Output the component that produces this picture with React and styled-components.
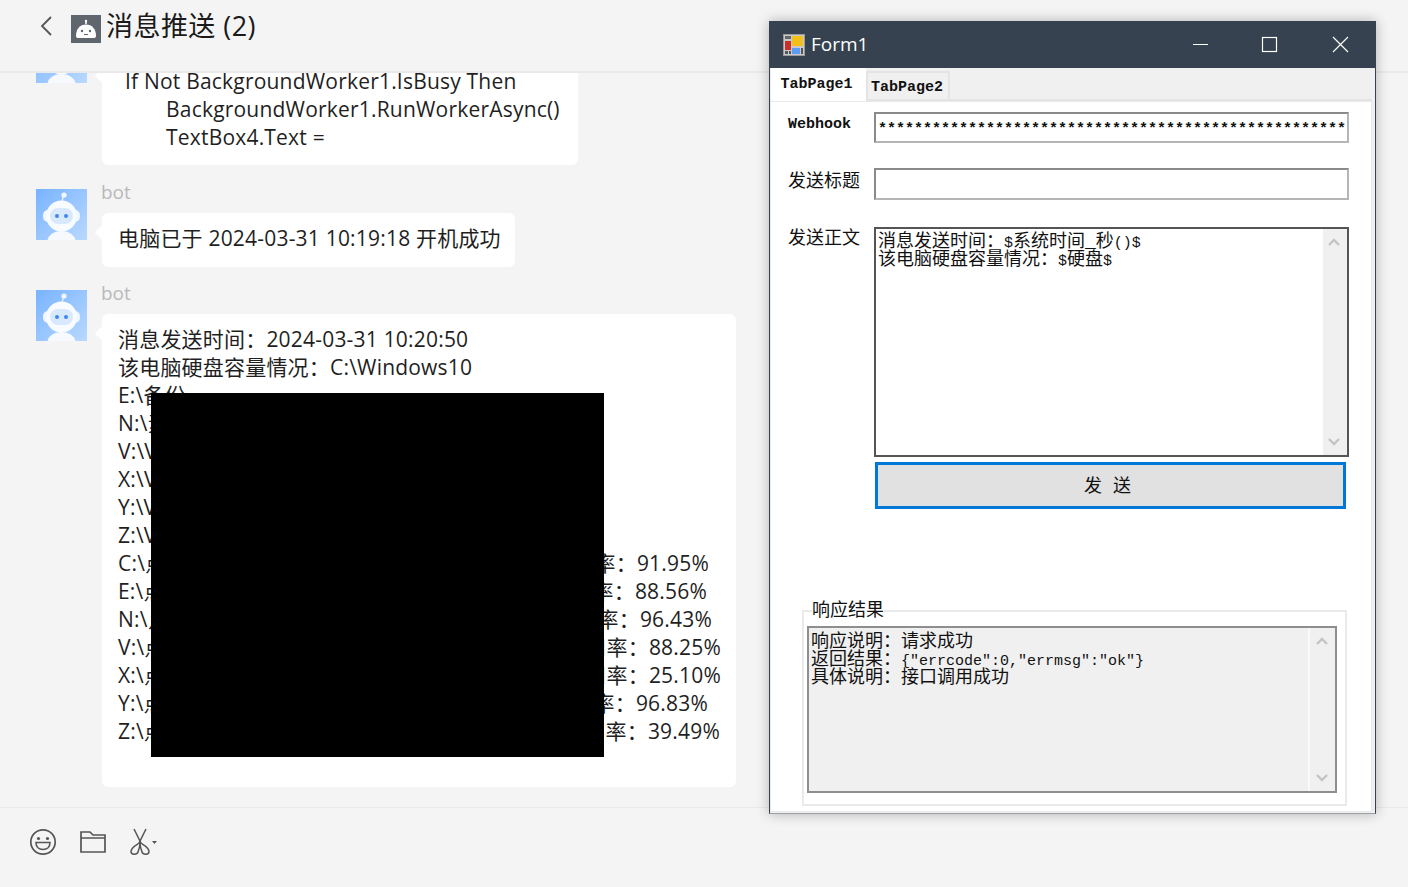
import React from "react";
import styled, { createGlobalStyle } from "styled-components";

const Global = createGlobalStyle`
  html, body { margin: 0; padding: 0; }
  body { background: #f4f4f4; overflow: hidden; }
`;

const UI_FONT = `"Open Sans", "Noto Sans CJK SC", sans-serif`;
const WIN_FONT = `"Liberation Mono", "Noto Sans CJK SC", monospace`;

const Page = styled.div`
  position: relative;
  width: 1408px;
  height: 887px;
  display: flex;
  flex-direction: column;
  background: #f4f4f4;
  color: #1f1f1f;
  font-family: ${UI_FONT};
  overflow: hidden;
`;

const Header = styled.header`
  flex: 0 0 73px;
  box-sizing: border-box;
  border-bottom: 2px solid #e9e9e9;
  display: flex;
  align-items: flex-start;
  padding: 11px 0 0 39px;
`;

const Back = styled.svg`
  width: 14px;
  height: 24px;
  margin-top: 3px;
  margin-right: 18px;
`;

const HeaderTitle = styled.h1`
  margin: 0 0 0 5px;
  font-size: 27px;
  line-height: 30px;
  font-weight: 400;
  letter-spacing: 0.45px;
  color: #1a1a1a;
`;

const HeaderIcon = styled.svg`
  width: 30px;
  height: 28px;
  margin-top: 4px;
`;

const Messages = styled.main`
  flex: 1;
  min-height: 0;
  overflow: hidden;
  display: flex;
  flex-direction: column;
  justify-content: flex-end;
  padding: 0 0 20px 36px;
`;

const Message = styled.div`
  flex: none;
  display: flex;
  gap: 15px;
  align-items: flex-start;
  margin-top: ${(props) => props.$gap || 0}px;
`;

const Avatar = styled.svg`
  flex: none;
  width: 51px;
  height: 51px;
`;

const MessageBody = styled.div`
  display: flex;
  flex-direction: column;
  align-items: flex-start;
`;

const Sender = styled.div`
  height: 24px;
  margin-left: -1px;
  font-size: 19px;
  line-height: 6px;
  color: #b9b9b9;
`;

const Bubble = styled.div`
  position: relative;
  box-sizing: border-box;
  background: #fff;
  border-radius: 6px;
  padding: 11px 16px 14px;
  min-height: 54px;
  width: ${(props) => props.$width}px;
  font-size: 21px;
  line-height: 28px;
  letter-spacing: 0.2px;
  white-space: nowrap;

  &::before {
    content: "";
    position: absolute;
    left: -5px;
    top: 14px;
    width: 11px;
    height: 11px;
    background: #fff;
    transform: rotate(45deg);
  }
`;

const Line = styled.div`
  height: 28px;
  padding-left: ${(props) => props.$indent || 0}px;
`;

const SplitLine = styled.div`
  height: 28px;
  width: ${(props) => props.$width}px;
  display: flex;
  justify-content: space-between;
`;

const Redaction = styled.div`
  position: absolute;
  left: 49px;
  top: 79px;
  width: 453px;
  height: 364px;
  background: #000;
`;

const Footer = styled.footer`
  flex: 0 0 80px;
  box-sizing: border-box;
  border-top: 1px solid #e9e9e9;
  display: flex;
  align-items: flex-start;
  padding: 20px 0 0 29px;
  gap: 22px;
`;

const ToolIcon = styled.svg`
  display: block;
`;

/* the floating WinForms window */
const Window = styled.section`
  position: absolute;
  left: 769px;
  top: 21px;
  width: 607px;
  height: 793px;
  box-sizing: border-box;
  display: flex;
  flex-direction: column;
  background: #f0f0f0;
  border-right: 1px solid #36424f;
  border-left: 1px solid #36424f;
  border-bottom: 1px solid #9a9fa5;
  box-shadow: 0 0 12px rgba(0, 0, 0, 0.28);
  font-family: ${WIN_FONT};
  font-size: 15px;
  color: #111;
`;

const TitleBar = styled.div`
  flex: 0 0 47px;
  background: #36424f;
  display: flex;
  align-items: center;
  padding-left: 13px;
  color: #fff;
  font-family: ${UI_FONT};
  font-size: 19px;
`;

const TitleText = styled.span`
  margin-left: 6px;
  margin-bottom: 2px;
  flex: 1;
`;

const WinButton = styled.svg`
  width: 71px;
  height: 47px;
  flex: none;
`;

const Tabs = styled.div`
  flex: 0 0 31px;
  box-sizing: border-box;
  display: flex;
  align-items: flex-end;
  padding-left: 1px;
`;

const Tab = styled.div`
  box-sizing: border-box;
  display: flex;
  align-items: center;
  justify-content: center;
  font-weight: 700;
  ${(props) =>
    props.$active
      ? `width: 95px; height: 33px; margin-bottom: -2px; background: #fff; padding: 0 4px 0 0; position: relative; z-index: 1;`
      : `width: 84px; height: 28px; border: 2px solid #e4e4e4; border-bottom: 0; padding: 2px 2px 0 0;`}
`;

const TabPanel = styled.div`
  flex: 1;
  min-height: 0;
  margin: 0 3px 1px 0;
  background: #fff;
  border: 1px solid #e4e4e4;
  border-width: 2px 0 0 0;
  box-shadow: 0 0 0 1px #e9e9e9 inset;
  padding: 11px 23px 0 18px;
  display: flex;
  flex-direction: column;
`;

const FormRow = styled.div`
  display: flex;
  align-items: flex-start;
  margin-bottom: ${(props) => props.$gap}px;
`;

const FieldLabel = styled.label`
  flex: 0 0 86px;
  font-size: ${(props) => (props.$latin ? 15 : 18)}px;
  font-weight: ${(props) => (props.$latin ? 700 : 400)};
  line-height: 18px;
  padding-top: ${(props) => props.$top}px;
`;

const TextField = styled.div`
  flex: 1;
  box-sizing: border-box;
  height: ${(props) => props.$height}px;
  border: 2px solid #8a8a8a;
  border-right-color: #b5b5b5;
  border-bottom-color: #b5b5b5;
  padding: 7px 0 0 2px;
  line-height: 18px;
  font-weight: 700;
  overflow: hidden;
  white-space: nowrap;
`;

const TextBox = styled.div`
  box-sizing: border-box;
  display: flex;
  justify-content: space-between;
  height: ${(props) => props.$height}px;
  background: ${(props) => props.$bg};
  border: 2px solid ${(props) => props.$border};
  flex: ${(props) => (props.$grow ? 1 : "none")};
`;

const BoxText = styled.div`
  padding: ${(props) => props.$pad};
  font-size: 18px;
  line-height: 18px;
  white-space: nowrap;
`;

const BoxLine = styled.div`
  height: 18px;
  font-size: 18px;
`;

const LatinPart = styled.span`
  font-size: 15px;
`;

const ScrollBar = styled.div`
  flex: 0 0 ${(props) => props.$width}px;
  box-sizing: border-box;
  display: flex;
  flex-direction: column;
  justify-content: space-between;
  align-items: center;
  padding: 8px 2px 8px 0;
  background: #f0f0f0;
  border-left: ${(props) => (props.$divider ? "2px solid #fafafa" : "0")};
`;

const Chevron = styled.svg`
  width: 14px;
  height: 10px;
  display: block;
`;

const SendRow = styled.div`
  margin-left: 87px;
  margin-right: 3px;
`;

const SendButton = styled.button`
  display: block;
  box-sizing: border-box;
  width: 100%;
  height: 47px;
  background: #e1e1e1;
  border: 3px solid #0078d7;
  border-radius: 0;
  font-family: ${WIN_FONT};
  font-size: 18px;
  color: #111;
  padding: 0 6px 3px 0;
`;

const GroupBox = styled.fieldset`
  box-sizing: border-box;
  margin: 93px 2px 0 14px;
  height: 204px;
  padding: 6px 8px 11px 3px;
  border: 2px solid #eaeaea;
  display: flex;
  flex-direction: column;
`;

const GroupTitle = styled.legend`
  font-size: 18px;
  line-height: 18px;
  padding: 0;
  margin-left: 5px;
`;

const chatLines = [
  ["C:\\点", "率：91.95%", 591],
  ["E:\\点", "率：88.56%", 589],
  ["N:\\点", "率：96.43%", 594],
  ["V:\\点", "用率：88.25%", 603],
  ["X:\\点", "用率：25.10%", 603],
  ["Y:\\点", "率：96.83%", 590],
  ["Z:\\点", "用率：39.49%", 602],
];

const RobotAvatar = ({ id }) => (
  <Avatar viewBox="0 0 51 51">
    <defs>
      <linearGradient id={id} x1="0" y1="0" x2="1" y2="1">
        <stop offset="0" stopColor="#78b3ff" />
        <stop offset="1" stopColor="#b9d9ff" />
      </linearGradient>
      <clipPath id={id + "c"}>
        <rect width="51" height="51" />
      </clipPath>
    </defs>
    <rect width="51" height="51" fill={`url(#${id})`} />
    <g clipPath={`url(#${id}c)`}>
      <path d="M25 18 L27.5 6" stroke="#dcebff" strokeWidth="1.5" />
      <circle cx="28" cy="6" r="2.6" fill="#f2f8ff" />
      <rect x="7" y="21" width="37" height="12" rx="5" fill="#eef6ff" />
      <circle cx="25.5" cy="27" r="15.5" fill="#f8fbff" />
      <rect x="14" y="19" width="23" height="16" rx="8" fill="#d9e9fd" />
      <circle cx="21" cy="27" r="2" fill="#3f86f0" />
      <circle cx="30" cy="27" r="2" fill="#3f86f0" />
      <ellipse cx="25.5" cy="52" rx="14" ry="10" fill="#f6faff" />
    </g>
  </Avatar>
);

const ChevronUp = () => (
  <Chevron viewBox="0 0 14 10">
    <path d="M2 8 L7 3 L12 8" fill="none" stroke="#c4c4c4" strokeWidth="2.4" />
  </Chevron>
);

const ChevronDown = () => (
  <Chevron viewBox="0 0 14 10">
    <path d="M2 2 L7 7 L12 2" fill="none" stroke="#c4c4c4" strokeWidth="2.4" />
  </Chevron>
);

const FormIcon = () => (
  <svg width="22" height="22" viewBox="0 0 22 22">
    <rect width="22" height="22" fill="#9a9a9a" />
    <rect x="1" y="1" width="20" height="20" fill="#c9c9c9" />
    <rect x="2" y="2" width="6" height="3" fill="#666" />
    <rect x="9" y="2" width="11" height="10" fill="#f2c018" />
    <rect x="2" y="7" width="6" height="9" fill="#c9302a" />
    <rect x="9" y="14" width="8" height="6" fill="#5b9bf0" />
    <rect x="18" y="14" width="2" height="6" fill="#555" />
    <rect x="2" y="17" width="3" height="3" fill="#555" />
    <rect x="6" y="17" width="2" height="3" fill="#555" />
  </svg>
);

export default function App() {
  return (
    <>
      <Global />
      <Page>
        <Header>
          <Back viewBox="0 0 14 24">
            <path d="M12 3 L3 12 L12 21" fill="none" stroke="#555" strokeWidth="1.8" />
          </Back>
          <HeaderIcon viewBox="0 0 30 28">
            <rect width="30" height="28" fill="#5f666e" />
            <path d="M15 5 L15 9" stroke="#fff" strokeWidth="1.6" />
            <circle cx="15" cy="6" r="1.2" fill="#fff" />
            <path d="M5 21 C5 14 9 9.5 15 9.5 C21 9.5 25 14 25 21 C25 22.5 24 23 22.5 23 L7.5 23 C6 23 5 22.5 5 21 Z" fill="#fff" />
            <circle cx="11" cy="16" r="1.2" fill="#5f666e" />
            <circle cx="19" cy="16" r="1.2" fill="#5f666e" />
            <rect x="13" y="19" width="4" height="1" fill="#5f666e" />
          </HeaderIcon>
          <HeaderTitle>消息推送 (2)</HeaderTitle>
        </Header>

        <Messages>
          <Message>
            <RobotAvatar id="a1" />
            <MessageBody>
              <Sender />
              <Bubble $width={476}>
                <Line $indent={7}>If Not BackgroundWorker1.IsBusy Then</Line>
                <Line $indent={48}>BackgroundWorker1.RunWorkerAsync()</Line>
                <Line $indent={48}>TextBox4.Text =</Line>
              </Bubble>
            </MessageBody>
          </Message>

          <Message $gap={24}>
            <RobotAvatar id="a2" />
            <MessageBody>
              <Sender>bot</Sender>
              <Bubble $width={413}>
                <Line>电脑已于 2024-03-31 10:19:18 开机成功</Line>
              </Bubble>
            </MessageBody>
          </Message>

          <Message $gap={23}>
            <RobotAvatar id="a3" />
            <MessageBody>
              <Sender>bot</Sender>
              <Bubble $width={634}>
                <Line>消息发送时间：2024-03-31 10:20:50</Line>
                <Line>该电脑硬盘容量情况：C:\Windows10</Line>
                <Line>E:\备份</Line>
                <Line>N:\素</Line>
                <Line>V:\V</Line>
                <Line>X:\V</Line>
                <Line>Y:\V</Line>
                <Line>Z:\V</Line>
                {chatLines.map(([head, tail, width]) => (
                  <SplitLine key={head} $width={width}>
                    <span>{head}</span>
                    <span>{tail}</span>
                  </SplitLine>
                ))}
                <Line />
                <Redaction />
              </Bubble>
            </MessageBody>
          </Message>
        </Messages>

        <Footer>
          <ToolIcon width="28" height="28" viewBox="0 0 28 28">
            <circle cx="14" cy="14" r="12.2" fill="none" stroke="#555" strokeWidth="1.7" />
            <circle cx="9.5" cy="10.5" r="1.6" fill="#555" />
            <circle cx="18.5" cy="10.5" r="1.6" fill="#555" />
            <path d="M7 14.5 H21 C21 19 18 21.5 14 21.5 C10 21.5 7 19 7 14.5 Z" fill="none" stroke="#555" strokeWidth="1.6" />
          </ToolIcon>
          <ToolIcon width="28" height="28" viewBox="0 0 28 28">
            <path d="M2 24 V4 H11 L14 7 H26 V24 Z M2 10 H26" fill="none" stroke="#555" strokeWidth="1.7" />
          </ToolIcon>
          <ToolIcon width="30" height="28" viewBox="0 0 30 28">
            <path d="M5 1 L12 15 C14 17 20 19 20 23.5 C20 27 14 27 13 24 C12 21 11 18 11 15" fill="none" stroke="#555" strokeWidth="1.5" />
            <path d="M17 1 L10 15 C8 17 2 19 2 23.5 C2 27 8 27 9 24 C10 21 11 18 11 15" fill="none" stroke="#555" strokeWidth="1.5" />
            <path d="M23 13 H28 L25.5 16 Z" fill="#555" />
          </ToolIcon>
        </Footer>

        <Window>
          <TitleBar>
            <FormIcon />
            <TitleText>Form1</TitleText>
            <WinButton viewBox="0 0 71 47">
              <path d="M31 23.5 H46" stroke="#fff" strokeWidth="1" />
            </WinButton>
            <WinButton viewBox="0 0 71 47">
              <rect x="29.5" y="16.5" width="14" height="14" fill="none" stroke="#fff" strokeWidth="1.2" />
            </WinButton>
            <WinButton viewBox="0 0 71 47">
              <path d="M29 16 L44 31 M44 16 L29 31" stroke="#fff" strokeWidth="1.2" />
            </WinButton>
          </TitleBar>
          <Tabs>
            <Tab $active>TabPage1</Tab>
            <Tab>TabPage2</Tab>
          </Tabs>
          <TabPanel>
            <FormRow $gap={25}>
              <FieldLabel $latin $top={4}>Webhook</FieldLabel>
              <TextField $height={31}>{"*".repeat(52)}</TextField>
            </FormRow>
            <FormRow $gap={27}>
              <FieldLabel $top={5}>发送标题</FieldLabel>
              <TextField $height={32} />
            </FormRow>
            <FormRow $gap={5}>
              <FieldLabel $top={3}>发送正文</FieldLabel>
              <TextBox $height={230} $bg="#fff" $border="#555" $grow>
                <BoxText $pad="4px 0 0 2px">
                  <BoxLine>消息发送时间：<LatinPart>$</LatinPart>系统时间_秒<LatinPart>()$</LatinPart></BoxLine>
                  <BoxLine>该电脑硬盘容量情况：<LatinPart>$</LatinPart>硬盘<LatinPart>$</LatinPart></BoxLine>
                </BoxText>
                <ScrollBar $width={24}>
                  <ChevronUp />
                  <ChevronDown />
                </ScrollBar>
              </TextBox>
            </FormRow>
            <SendRow>
              <SendButton>发 送</SendButton>
            </SendRow>
            <GroupBox>
              <GroupTitle>响应结果</GroupTitle>
              <TextBox $height={167} $bg="#f0f0f0" $border="#8e8e8e">
                <BoxText $pad="5px 0 0 2px">
                  <BoxLine>响应说明：请求成功</BoxLine>
                  <BoxLine>返回结果：<LatinPart>{'{"errcode":0,"errmsg":"ok"}'}</LatinPart></BoxLine>
                  <BoxLine>具体说明：接口调用成功</BoxLine>
                </BoxText>
                <ScrollBar $width={27} $divider>
                  <ChevronUp />
                  <ChevronDown />
                </ScrollBar>
              </TextBox>
            </GroupBox>
          </TabPanel>
        </Window>
      </Page>
    </>
  );
}
